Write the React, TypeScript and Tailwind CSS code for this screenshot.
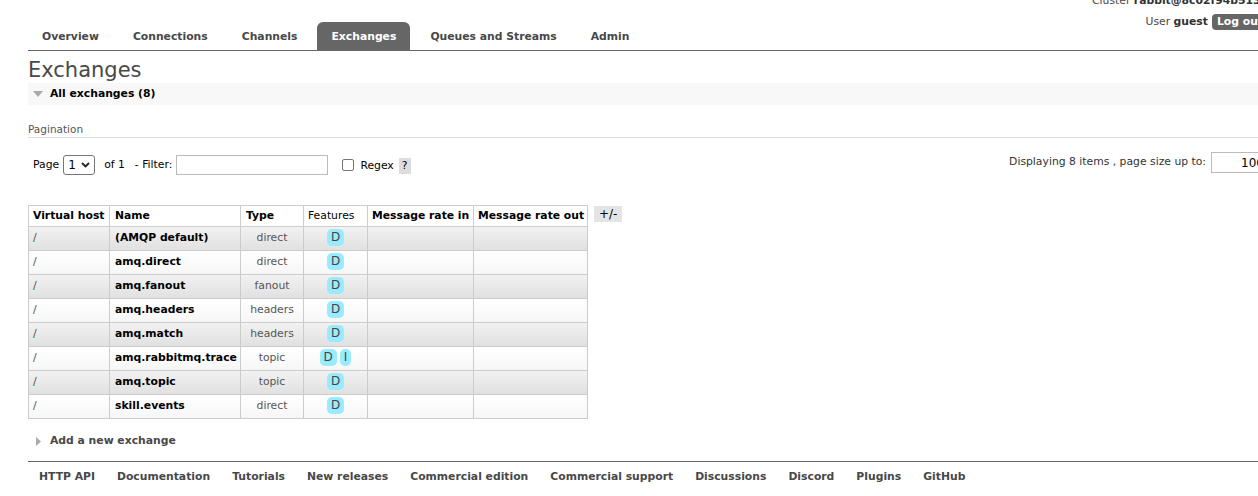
import React from "react";

const tabs = ["Overview", "Connections", "Channels", "Exchanges", "Queues and Streams", "Admin"];
const rows: { name: string; type: string; features: string[] }[] = [
  { name: "(AMQP default)", type: "direct", features: ["D"] },
  { name: "amq.direct", type: "direct", features: ["D"] },
  { name: "amq.fanout", type: "fanout", features: ["D"] },
  { name: "amq.headers", type: "headers", features: ["D"] },
  { name: "amq.match", type: "headers", features: ["D"] },
  { name: "amq.rabbitmq.trace", type: "topic", features: ["D", "I"] },
  { name: "amq.topic", type: "topic", features: ["D"] },
  { name: "skill.events", type: "direct", features: ["D"] },
];
const footer = [
  "HTTP API",
  "Documentation",
  "Tutorials",
  "New releases",
  "Commercial edition",
  "Commercial support",
  "Discussions",
  "Discord",
  "Plugins",
  "GitHub",
];

export default function App() {
  return (
    <div className="w-[1258px] h-[496px] overflow-hidden bg-white font-['DejaVu_Sans',Verdana,sans-serif] text-[10.8px] text-[#484848]">
      <div className="w-[1268px] pl-[28px]">
        {/* header */}
        <div className="flex justify-between items-end border-b border-[#666] -mt-[6px]">
          <ul className="flex gap-[6px] self-end">
            {tabs.map((t) => (
              <li key={t}>
                <span
                  className={
                    t === "Exchanges"
                      ? "flex items-center h-[28px] pt-[3px] px-[14px] font-bold bg-[#666] text-white rounded-t-[6px] whitespace-nowrap"
                      : "flex items-center h-[28px] pt-[3px] px-[14px] font-bold text-[#484848] whitespace-nowrap"
                  }
                >
                  {t}
                </span>
              </li>
            ))}
          </ul>
          <div className="self-start flex flex-col items-end gap-[6px] pb-[20px]">
            <div className="leading-[14px] whitespace-nowrap">
              Cluster <b className="text-[#333]">rabbit@8c02f94b5131</b>
            </div>
            <div className="flex items-center gap-[4px] leading-[14px] whitespace-nowrap">
              <span>
                User <b className="text-[#333]">guest</b>
              </span>
              <span className="h-[16px] px-[5px] flex items-center bg-[#666] text-white font-bold rounded-[4px]">
                Log out
              </span>
            </div>
          </div>
        </div>

        {/* title */}
        <h1 className="mt-[6px] text-[21px] leading-[26px] font-normal text-[#484848]">Exchanges</h1>

        <div className="h-[22px] bg-[#f8f8f8] flex items-center pl-[5px] gap-[7px]">
          <svg width="10" height="6" viewBox="0 0 10 6">
            <path d="M0 0 H10 L5 6 Z" fill="#aaa" />
          </svg>
          <span className="font-bold text-black">All exchanges (8)</span>
        </div>

        <div className="mt-[17px] leading-[14px] pb-[1px] border-b border-[#ddd] text-[10.5px] text-[#555]">
          Pagination
        </div>

        {/* controls */}
        <div className="mt-[14px] flex justify-between items-start text-black">
          <div className="flex items-center pt-[3px] pl-[5px]">
            <span>Page</span>
            <div className="ml-[4px] w-[32px] h-[20px] border border-[#767676] rounded-[3px] flex items-center justify-between px-[4px] text-[12px]">
              <span>1</span>
              <svg width="9" height="6" viewBox="0 0 9 6">
                <path d="M1 1 L4.5 4.5 L8 1" fill="none" stroke="#222" strokeWidth="1.8" />
              </svg>
            </div>
            <span className="ml-[9px]">of 1</span>
            <span className="ml-[10px]">- Filter:</span>
            <div className="ml-[4px] w-[152px] h-[20px] border border-[#bbb]" />
            <div className="ml-[14px] w-[12px] h-[12px] border border-[#767676] rounded-[2px]" />
            <span className="ml-[6px] mt-[2px]">Regex</span>
            <span className="ml-[5px] w-[12px] h-[16px] bg-[#ddd] flex items-center justify-center mt-[2px]">?</span>
          </div>
          <div className="flex items-center gap-[5px] text-[#333]">
            <span className="whitespace-nowrap">Displaying 8 items , page size up to:</span>
            <div className="w-[57px] h-[21px] border border-[#bbb] flex items-center justify-end pr-[3px] text-black text-[12px]">
              100
            </div>
          </div>
        </div>

        {/* table */}
        <div className="mt-[30px] flex items-start gap-[6px]">
          <table className="table-fixed border-collapse w-[559px]">
            <colgroup>
              <col className="w-[81px]" />
              <col className="w-[131px]" />
              <col className="w-[63px]" />
              <col className="w-[64px]" />
              <col className="w-[106px]" />
              <col className="w-[114px]" />
            </colgroup>
            <thead>
              <tr className="h-[21px]">
                <th className="border border-[#ccc] px-[4px] text-left font-bold text-black whitespace-nowrap">Virtual host</th>
                <th className="border border-[#ccc] px-[5px] text-left font-bold text-black whitespace-nowrap">Name</th>
                <th className="border border-[#ccc] px-[5px] text-left font-bold text-black whitespace-nowrap">Type</th>
                <th className="border border-[#ccc] px-[4px] text-left font-normal text-black whitespace-nowrap">Features</th>
                <th className="border border-[#ccc] px-[4px] text-left font-bold text-black whitespace-nowrap">Message rate in</th>
                <th className="border border-[#ccc] px-[4px] text-left font-bold text-black whitespace-nowrap">Message rate out</th>
              </tr>
            </thead>
            <tbody>
              {rows.map((r, i) => (
                <tr
                  key={r.name}
                  className={
                    i % 2 === 0
                      ? "h-[24px] bg-gradient-to-b from-[#f2f2f2] to-[#e0e0e0]"
                      : "h-[24px] bg-gradient-to-b from-white to-[#f6f6f6]"
                  }
                >
                  <td className="border border-[#ccc] px-[4px] align-top pt-[3px] text-[#555]">/</td>
                  <td className="border border-[#ccc] px-[5px] align-top pt-[3px] font-bold text-black whitespace-nowrap">{r.name}</td>
                  <td className="border border-[#ccc] px-[4px] align-top pt-[3px] text-center text-[#555]">{r.type}</td>
                  <td className="border border-[#ccc] px-[4px] align-top pt-[2px] text-center">
                    <div className="flex justify-center gap-[3px]">
                      {r.features.map((f) => (
                        <span
                          key={f}
                          className="inline-block h-[17px] leading-[17px] px-[4px] bg-[#99ebff] rounded-[5px] text-[12px] text-[#444]"
                        >
                          {f}
                        </span>
                      ))}
                    </div>
                  </td>
                  <td className="border border-[#ccc]" />
                  <td className="border border-[#ccc]" />
                </tr>
              ))}
            </tbody>
          </table>
          <span className="mt-[1px] h-[16px] px-[5px] flex items-center bg-[#e4e4e4] text-[12px] text-black">+/-</span>
        </div>

        <div className="mt-[15px] flex items-center pl-[8px] gap-[9px] h-[14px]">
          <svg width="5" height="9" viewBox="0 0 5 9">
            <path d="M0 0 L5 4.5 L0 9 Z" fill="#aaa" />
          </svg>
          <span className="font-bold text-[#484848]">Add a new exchange</span>
        </div>

        <div className="mt-[13px] border-t border-[#666] flex pt-[8px]">
          {footer.map((f) => (
            <span key={f} className="px-[11px] font-bold text-[#484848] leading-[14px] whitespace-nowrap">
              {f}
            </span>
          ))}
        </div>
      </div>
    </div>
  );
}
